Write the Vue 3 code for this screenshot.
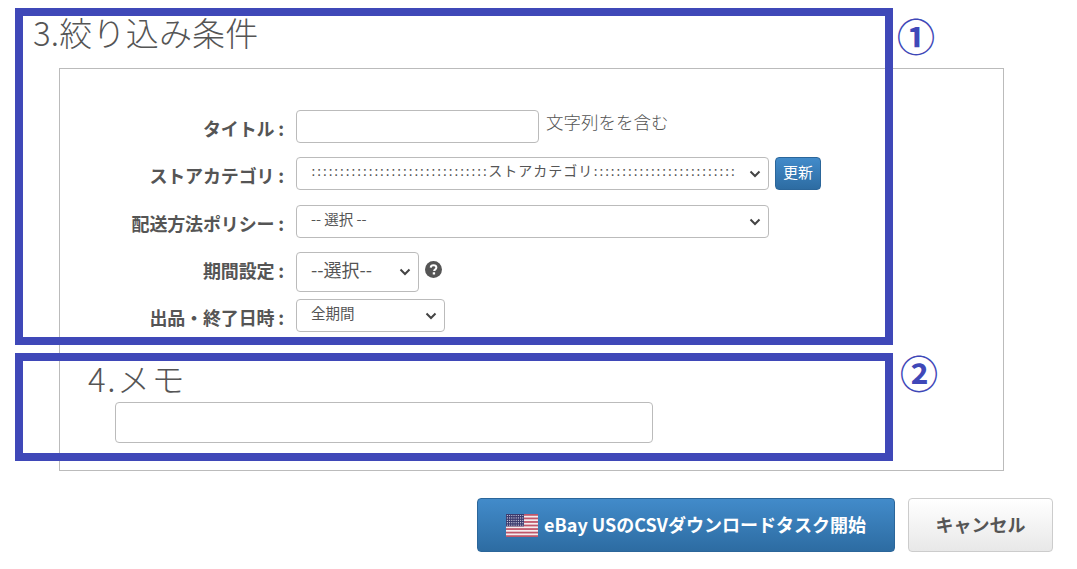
<template>
  <div class="page">
    <h2 class="section-title">3.絞り込み条件</h2>

    <div class="panel">
      <div class="form-row">
        <label class="form-label">タイトル :</label>
        <input class="text-input title-input" type="text" />
        <span class="hint">文字列をを含む</span>
      </div>

      <div class="form-row">
        <label class="form-label">ストアカテゴリ :</label>
        <div class="select-wrap wide">
          <select class="select-box dotted">
            <option>{{ storeCategoryLabel }}</option>
          </select>
          <svg class="chevron" viewBox="0 0 12 8"><path d="M1.5 1.5 6 6l4.5-4.5" /></svg>
        </div>
        <button class="refresh-btn" type="button">更新</button>
      </div>

      <div class="form-row">
        <label class="form-label">配送方法ポリシー :</label>
        <div class="select-wrap wide">
          <select class="select-box">
            <option>-- 選択 --</option>
          </select>
          <svg class="chevron" viewBox="0 0 12 8"><path d="M1.5 1.5 6 6l4.5-4.5" /></svg>
        </div>
      </div>

      <div class="form-row tight">
        <label class="form-label">期間設定 :</label>
        <div class="select-wrap period">
          <select class="select-box large">
            <option>--選択--</option>
          </select>
          <svg class="chevron" viewBox="0 0 12 8"><path d="M1.5 1.5 6 6l4.5-4.5" /></svg>
        </div>
        <svg class="help-icon" viewBox="0 0 16 16">
          <circle cx="8" cy="8" r="8" fill="#555" />
          <path d="M5.4 6.2C5.5 4.7 6.6 4 8 4c1.5 0 2.7.8 2.7 2.2 0 1.9-2.1 1.8-2.1 3.2" fill="none" stroke="#fff" stroke-width="1.9" />
          <rect x="7.3" y="10.6" width="2.2" height="2.1" fill="#fff" />
        </svg>
      </div>

      <div class="form-row last">
        <label class="form-label">出品・終了日時 :</label>
        <div class="select-wrap date">
          <select class="select-box">
            <option>全期間</option>
          </select>
          <svg class="chevron" viewBox="0 0 12 8"><path d="M1.5 1.5 6 6l4.5-4.5" /></svg>
        </div>
      </div>

      <div class="memo">
        <h2 class="section-title memo-title">4.メモ</h2>
        <input class="text-input memo-input" type="text" />
      </div>
    </div>

    <div class="actions">
      <button class="btn btn-primary" type="button">
        <svg class="flag" viewBox="0 0 32 23">
          <rect width="32" height="23" fill="#f4eef0" />
          <rect v-for="y in stripes" :key="y" x="0" :y="y" width="32" height="1.77" fill="#c0566a" />
          <rect width="18" height="12.4" fill="#3c3b6e" />
          <circle v-for="star in stars" :key="star.id" :cx="star.x" :cy="star.y" r="0.6" fill="#d9d9e8" />
        </svg>
        eBay USのCSVダウンロードタスク開始
      </button>
      <button class="btn btn-cancel" type="button">キャンセル</button>
    </div>

    <div class="callout callout-one"></div>
    <div class="callout callout-two"></div>
    <span class="callout-mark mark-one">①</span>
    <span class="callout-mark mark-two">②</span>
  </div>
</template>

<script setup>
const storeCategoryLabel = ':'.repeat(31) + 'ストアカテゴリ' + ':'.repeat(31)

const stripes = [0, 3.54, 7.08, 10.62, 14.16, 17.7, 21.23]

// canton dots, close enough to stars at this size
const stars = []
for (let row = 0; row < 5; row++) {
  for (let col = 0; col < 8; col++) {
    stars.push({ id: row + '-' + col, x: 1.4 + col * 2.2, y: 1.5 + row * 2.4 })
  }
}
</script>

<style scoped>
.page {
  position: relative;
  width: 1077px;
  height: 569px;
  overflow: hidden;
  background: #fff;
  color: #555;
  font-family: "Noto Sans CJK JP", "Open Sans", sans-serif;
}

.section-title {
  height: 68px;
  margin: 0 0 0 33px;
  color: #555;
  font-size: 33px;
  font-weight: 300;
  letter-spacing: 0.2px;
  line-height: 64px;
}

.panel {
  box-sizing: border-box;
  width: 945px;
  height: 403px;
  margin-left: 59px;
  padding-top: 41px;
  border: 1px solid #bbb;
}

.form-row {
  display: flex;
  align-items: center;
  margin-bottom: 14px;
}

.form-row:nth-child(2) {
  margin-bottom: 15px;
}

.form-row.tight {
  margin-bottom: 7px;
}

.form-row.last {
  margin-bottom: 0;
}

.form-label {
  align-self: flex-start;
  width: 224px;
  height: 33px;
  margin-right: 12px;
  font-size: 18px;
  font-weight: 700;
  letter-spacing: -0.15px;
  line-height: 37px;
  text-align: right;
  white-space: nowrap;
}

.text-input {
  box-sizing: border-box;
  border: 1px solid #bbb;
  border-radius: 4px;
  background: #fff;
}

.title-input {
  width: 243px;
  height: 33px;
}

.hint {
  margin-left: 7px;
  padding-bottom: 9px;
  font-size: 17.5px;
  font-weight: 300;
  line-height: 24px;
}

.select-wrap {
  position: relative;
}

.select-wrap.wide {
  width: 473px;
}

.select-wrap.period {
  width: 123px;
}

.select-wrap.date {
  width: 149px;
}

.select-box {
  display: block;
  box-sizing: border-box;
  width: 100%;
  height: 33px;
  padding: 0 33px 6px 14px;
  border: 1px solid #bbb;
  border-radius: 4px;
  background: #fff;
  color: #555;
  font-family: inherit;
  font-size: 14.5px;
  appearance: none;
}

.select-box.dotted {
  font-family: "DejaVu Sans", "Noto Sans CJK JP", sans-serif;
  font-size: 14px;
  letter-spacing: 1px;
}

.select-box.large {
  height: 40px;
  font-size: 18px;
}

.chevron {
  position: absolute;
  top: 50%;
  right: 8px;
  width: 12px;
  height: 8px;
  margin-top: -4px;
  fill: none;
  stroke: #444;
  stroke-width: 2;
  pointer-events: none;
}

.refresh-btn {
  width: 46px;
  height: 33px;
  margin-left: 6px;
  padding: 0 0 5px;
  border: 1px solid #2b669a;
  border-radius: 4px;
  background: linear-gradient(#428bca, #2d6ca2);
  color: #fff;
  font-family: inherit;
  font-size: 15px;
}

.help-icon {
  width: 17px;
  height: 17px;
  margin: 0 0 5px 6px;
}

.memo {
  margin-left: 28px;
}

.memo-title {
  height: 39px;
  margin: 31px 0 0;
  letter-spacing: 1.5px;
  line-height: 30px;
}

.memo-input {
  display: block;
  width: 538px;
  height: 41px;
  margin-left: 27px;
}

.actions {
  display: flex;
  justify-content: flex-end;
  gap: 13px;
  padding: 27px 24px 0 0;
}

.btn {
  display: flex;
  align-items: center;
  justify-content: center;
  box-sizing: border-box;
  height: 54px;
  padding-bottom: 3px;
  border-radius: 4px;
  font-family: inherit;
  font-size: 18px;
  font-weight: 700;
}

.btn-primary {
  gap: 6px;
  width: 418px;
  border: 1px solid #2b669a;
  background: linear-gradient(#428bca, #2d6ca2);
  color: #fff;
}

.btn-cancel {
  width: 145px;
  border: 1px solid #ccc;
  background: linear-gradient(#fff, #e8e8e8);
  color: #555;
}

.flag {
  width: 32px;
  height: 23px;
  margin-top: 3px;
}

.callout {
  position: absolute;
  left: 15px;
  box-sizing: border-box;
  width: 878px;
  border: 8px solid #3f48b8;
}

.callout-one {
  top: 8px;
  height: 337px;
}

.callout-two {
  top: 353px;
  height: 108px;
}

.callout-mark {
  position: absolute;
  color: #3f48b8;
  font-size: 38px;
  font-weight: 700;
  line-height: 38px;
}

.mark-one {
  top: 16px;
  left: 897px;
}

.mark-two {
  top: 353px;
  left: 900px;
}
</style>
